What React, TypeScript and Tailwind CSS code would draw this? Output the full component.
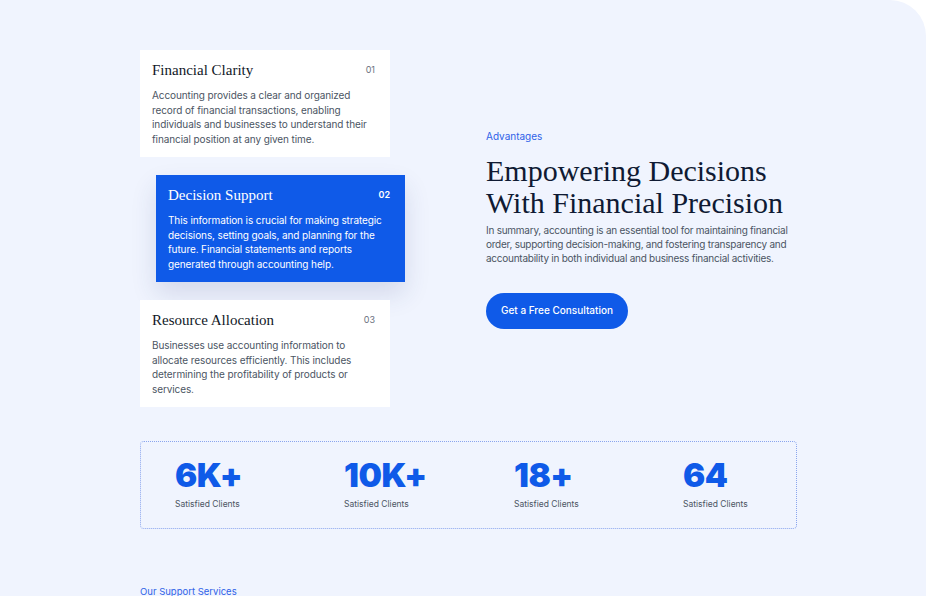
import React from "react";

function Card({ title, num, text, active }: { title: string; num: string; text: string; active?: boolean }) {
  return (
    <div
      className={
        active
          ? "ml-[16px] w-[249px] bg-[#0f5ae8] px-[12px] pt-[11px] pb-[11px] shadow-[0_12px_24px_rgba(40,60,120,0.14)]"
          : "w-[250px] bg-white px-[12px] pt-[11px] pb-[11px]"
      }
    >
      <div className="flex items-center justify-between">
        <div
          className={
            active
              ? "font-['Liberation_Serif',serif] text-[15px] leading-[18px] text-white"
              : "font-['Liberation_Serif',serif] text-[15px] leading-[18px] text-[#111827]"
          }
        >
          {title}
        </div>
        <div
          className={
            active
              ? "pr-[3px] font-['Inter',sans-serif] text-[9px] font-semibold text-white"
              : "pr-[3px] font-['Inter',sans-serif] text-[9px] text-[#6b7280]"
          }
        >
          {num}
        </div>
      </div>
      <p
        className={
          active
            ? "mt-[9px] font-['Inter',sans-serif] text-[10px] leading-[14.5px] tracking-[-0.1px] text-white"
            : "mt-[9px] font-['Inter',sans-serif] text-[10px] leading-[14.5px] tracking-[-0.1px] text-[#4b5563]"
        }
      >
        {text}
      </p>
    </div>
  );
}

function Stat({ n }: { n: string }) {
  return (
    <div>
      <div className="font-['Inter',sans-serif] text-[33px] font-black leading-[40px] tracking-[-0.5px] text-[#0f5ae8]">
        {n}
      </div>
      <div className="mt-[3px] font-['Inter',sans-serif] text-[8.5px] text-[#4b5563]">Satisfied Clients</div>
    </div>
  );
}

export default function App() {
  return (
    <div className="min-h-[596px] w-full bg-white">
      <div className="h-[596px] w-[926px] overflow-hidden rounded-tr-[36px] bg-[#f0f4fe] pl-[140px] pt-[50px]">
        <div className="flex items-center">
          <div className="flex w-[265px] flex-col gap-[18px]">
            <Card
              title="Financial Clarity"
              num="01"
              text="Accounting provides a clear and organized record of financial transactions, enabling individuals and businesses to understand their financial position at any given time."
            />
            <Card
              active
              title="Decision Support"
              num="02"
              text="This information is crucial for making strategic decisions, setting goals, and planning for the future. Financial statements and reports generated through accounting help."
            />
            <Card
              title="Resource Allocation"
              num="03"
              text="Businesses use accounting information to allocate resources efficiently. This includes determining the profitability of products or services."
            />
          </div>
          <div className="ml-[81px] w-[320px]">
            <div className="font-['Inter',sans-serif] text-[10px] text-[#2e62e8]">Advantages</div>
            <h1 className="mt-[11px] whitespace-nowrap font-['Liberation_Serif',serif] text-[30px] leading-[32px] text-[#0f1a33]">
              Empowering Decisions
              <br />
              With Financial Precision
            </h1>
            <p className="mt-[4px] font-['Inter',sans-serif] text-[10px] leading-[14px] tracking-[-0.25px] text-[#4b5563]">
              In summary, accounting is an essential tool for maintaining financial order, supporting decision-making, and fostering transparency and accountability in both individual and business financial activities.
            </p>
            <button className="mt-[28px] h-[36px] w-[142px] rounded-full bg-[#0f5ae8] font-['Inter',sans-serif] text-[10px] font-medium text-white">
              Get a Free Consultation
            </button>
          </div>
        </div>

        <div className="mt-[34px] grid h-[88px] w-[657px] grid-cols-[169px_170px_169px_auto] rounded-[4px] border border-dotted border-[#8aa5ee] pl-[34px] pt-[13px]">
          <Stat n="6K+" />
          <Stat n="10K+" />
          <Stat n="18+" />
          <Stat n="64" />
        </div>

        <div className="mt-[57px] font-['Inter',sans-serif] text-[9.5px] leading-[12px] text-[#2e62e8]">Our Support Services</div>
      </div>
    </div>
  );
}
